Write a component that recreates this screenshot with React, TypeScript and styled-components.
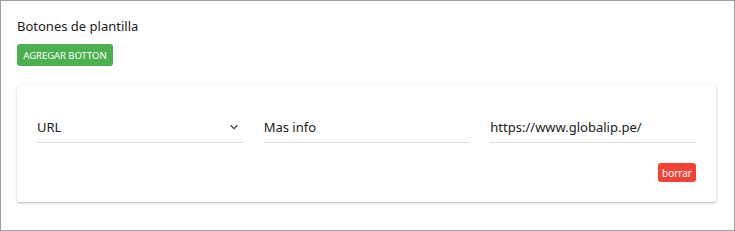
import React from 'react';
import styled, { createGlobalStyle } from 'styled-components';

const GlobalStyle = createGlobalStyle`
	html, body {
		margin: 0;
		padding: 0;
		background: #ffffff;
	}

	body {
		font-family: 'Segoe UI', 'Noto Sans', 'Open Sans', sans-serif;
		color: #212121;
	}

	* {
		box-sizing: border-box;
	}
`;

const Frame = styled.div`
	width: 735px;
	height: 231px;
	border: 1px solid #a0a0a0;
	padding: 16px 18px 0 16px;
`;

const Title = styled.div`
	font-size: 13px;
	line-height: 18px;
	color: #212121;
`;

const Button = styled.button<{ $color: string }>`
	display: inline-flex;
	align-items: center;
	justify-content: center;
	border: none;
	border-radius: 3px;
	background-color: ${(p) => p.$color};
	color: #ffffff;
	font-family: inherit;
	font-size: 10px;
	padding: 0;
	white-space: nowrap;
	cursor: pointer;
`;

const AddButton = styled(Button)`
	height: 22px;
	margin-top: 9px;
	text-transform: uppercase;
	width: 96px;
	font-size: 9.6px;
	letter-spacing: -0.1px;
`;

const Card = styled.div`
	margin-top: 19px;
	background: #ffffff;
	border-radius: 3px;
	box-shadow: 0 1px 3px rgba(0, 0, 0, 0.22), 0 1px 1px rgba(0, 0, 0, 0.08);
	padding: 28px 20px 20px 20px;
	height: 117px;
`;

const Fields = styled.div`
	display: grid;
	grid-template-columns: repeat(3, 1fr);
	column-gap: 21px;
`;

const Field = styled.div`
	display: flex;
	align-items: center;
	justify-content: space-between;
	height: 30px;
	border-bottom: 1px solid #dcdcdc;
	font-size: 13px;
	color: #212121;
	padding-bottom: 2px;
`;

const Actions = styled.div`
	display: flex;
	justify-content: flex-end;
	margin-top: 20px;
`;

const DeleteButton = styled(Button)`
	height: 19px;
	width: 38px;
`;

const Chevron = () => (
	<svg width="10" height="10" viewBox="0 0 10 10" style={{ marginRight: 4 }}>
		<path d="M1.5 3.2 L5 6.6 L8.5 3.2" fill="none" stroke="#444" strokeWidth="1.3" />
	</svg>
);

const App = () => (
	<>
		<GlobalStyle />
		<Frame>
			<Title>Botones de plantilla</Title>
			<AddButton type="button" $color="#4caf50">
				Agregar botton
			</AddButton>
			<Card>
				<Fields>
					<Field>
						<span>URL</span>
						<Chevron />
					</Field>
					<Field>
						<span>Mas info</span>
					</Field>
					<Field>
						<span>https://www.globalip.pe/</span>
					</Field>
				</Fields>
				<Actions>
					<DeleteButton type="button" $color="#f44336">
						borrar
					</DeleteButton>
				</Actions>
			</Card>
		</Frame>
	</>
);

export default App;
